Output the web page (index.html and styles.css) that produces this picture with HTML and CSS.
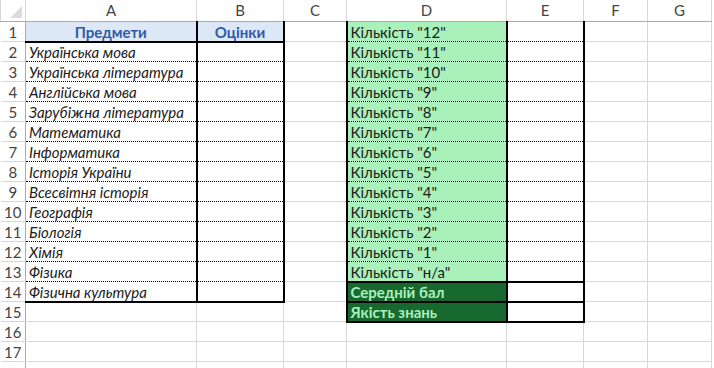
FILE: index.html
```html
<!DOCTYPE html>
<html lang="uk">
<head>
    <meta charset="UTF-8">
    <title>Оцінки</title>
    <link rel="stylesheet" href="styles.css">
</head>
<body>
    <!-- Аркуш: предмети з оцінками та підсумкова статистика -->
    <table class="sheet">
        <colgroup>
            <col class="w-rh">
            <col class="w-a">
            <col class="w-b">
            <col class="w-c">
            <col class="w-d">
            <col class="w-e">
            <col class="w-f">
            <col class="w-g">
        </colgroup>
        <tr class="col-head">
            <th class="corner"><span class="tri"></span></th>
            <th>A</th><th>B</th><th>C</th><th>D</th><th>E</th><th>F</th><th>G</th>
        </tr>
        <tr>
            <th class="rh">1</th>
            <td class="title tb tr">Предмети</td>
            <td class="title tb tr">Оцінки</td>
            <td class="tr"></td>
            <td class="in green tr">Кількість "12"</td>
            <td class="in tr"></td>
            <td></td><td></td>
        </tr>
        <tr>
            <th class="rh">2</th>
            <td class="in subj tr">Українська мова</td>
            <td class="in tr"></td>
            <td class="tr"></td>
            <td class="in green tr">Кількість "11"</td>
            <td class="in tr"></td>
            <td></td><td></td>
        </tr>
        <tr>
            <th class="rh">3</th>
            <td class="in subj tr">Українська література</td>
            <td class="in tr"></td>
            <td class="tr"></td>
            <td class="in green tr">Кількість "10"</td>
            <td class="in tr"></td>
            <td></td><td></td>
        </tr>
        <tr>
            <th class="rh">4</th>
            <td class="in subj tr">Англійська мова</td>
            <td class="in tr"></td>
            <td class="tr"></td>
            <td class="in green tr">Кількість "9"</td>
            <td class="in tr"></td>
            <td></td><td></td>
        </tr>
        <tr>
            <th class="rh">5</th>
            <td class="in subj tr">Зарубіжна література</td>
            <td class="in tr"></td>
            <td class="tr"></td>
            <td class="in green tr">Кількість "8"</td>
            <td class="in tr"></td>
            <td></td><td></td>
        </tr>
        <tr>
            <th class="rh">6</th>
            <td class="in subj tr">Математика</td>
            <td class="in tr"></td>
            <td class="tr"></td>
            <td class="in green tr">Кількість "7"</td>
            <td class="in tr"></td>
            <td></td><td></td>
        </tr>
        <tr>
            <th class="rh">7</th>
            <td class="in subj tr">Інформатика</td>
            <td class="in tr"></td>
            <td class="tr"></td>
            <td class="in green tr">Кількість "6"</td>
            <td class="in tr"></td>
            <td></td><td></td>
        </tr>
        <tr>
            <th class="rh">8</th>
            <td class="in subj tr">Історія України</td>
            <td class="in tr"></td>
            <td class="tr"></td>
            <td class="in green tr">Кількість "5"</td>
            <td class="in tr"></td>
            <td></td><td></td>
        </tr>
        <tr>
            <th class="rh">9</th>
            <td class="in subj tr">Всесвітня історія</td>
            <td class="in tr"></td>
            <td class="tr"></td>
            <td class="in green tr">Кількість "4"</td>
            <td class="in tr"></td>
            <td></td><td></td>
        </tr>
        <tr>
            <th class="rh">10</th>
            <td class="in subj tr">Географія</td>
            <td class="in tr"></td>
            <td class="tr"></td>
            <td class="in green tr">Кількість "3"</td>
            <td class="in tr"></td>
            <td></td><td></td>
        </tr>
        <tr>
            <th class="rh">11</th>
            <td class="in subj tr">Біологія</td>
            <td class="in tr"></td>
            <td class="tr"></td>
            <td class="in green tr">Кількість "2"</td>
            <td class="in tr"></td>
            <td></td><td></td>
        </tr>
        <tr>
            <th class="rh">12</th>
            <td class="in subj tr">Хімія</td>
            <td class="in tr"></td>
            <td class="tr"></td>
            <td class="in green tr">Кількість "1"</td>
            <td class="in tr"></td>
            <td></td><td></td>
        </tr>
        <tr>
            <th class="rh">13</th>
            <td class="in subj tr">Фізика</td>
            <td class="in tr"></td>
            <td class="tr"></td>
            <td class="in green tr tb">Кількість "н/а"</td>
            <td class="in tr tb"></td>
            <td></td><td></td>
        </tr>
        <tr>
            <th class="rh">14</th>
            <td class="in subj tr tb">Фізична культура</td>
            <td class="in tr tb"></td>
            <td class="tr"></td>
            <td class="dark tr tb">Середній бал</td>
            <td class="tr tb"></td>
            <td></td><td></td>
        </tr>
        <tr>
            <th class="rh">15</th>
            <td></td><td></td>
            <td class="tr"></td>
            <td class="dark tr tb">Якість знань</td>
            <td class="tr tb"></td>
            <td></td><td></td>
        </tr>
        <tr>
            <th class="rh">16</th>
            <td></td><td></td><td></td><td></td><td></td><td></td><td></td>
        </tr>
        <tr>
            <th class="rh">17</th>
            <td></td><td></td><td></td><td></td><td></td><td></td><td></td>
        </tr>
        <tr>
            <th class="rh"></th>
            <td></td><td></td><td></td><td></td><td></td><td></td><td></td>
        </tr>
    </table>
</body>
</html>
```

FILE: styles.css
```css
body {
    margin: 0;
    background-color: #fff;
    font-family: Lato, "Open Sans", sans-serif;
    font-size: 15px;
    color: #1b1b1b;
    overflow: hidden;
}

.sheet {
    border-collapse: collapse;
    table-layout: fixed;
    width: 711px;
}

.w-rh { width: 25px; }
.w-a { width: 171px; }
.w-b { width: 87px; }
.w-c { width: 63px; }
.w-d { width: 160px; }
.w-e { width: 77px; }
.w-f { width: 64px; }
.w-g { width: 64px; }

.sheet tr {
    height: 20px;
}

.sheet td {
    border: 1px solid #d8d8d8;
    padding: 0 3px;
    white-space: nowrap;
    overflow: hidden;
    vertical-align: bottom;
    line-height: 17px;
}

/* заголовки стовпців і рядків */
.col-head {
    height: 22px;
}

.col-head th {
    border: 1px solid #d8d8d8;
    border-top: none;
    border-bottom: 1px solid #ababab;
    font-weight: normal;
    color: #444;
    padding: 0;
    line-height: 21px;
}

.corner {
    position: relative;
}

.tri {
    position: absolute;
    right: 3px;
    bottom: 3px;
    width: 0;
    height: 0;
    border-left: 12px solid transparent;
    border-bottom: 12px solid #dcdcdc;
}

.rh {
    border: 1px solid #d8d8d8;
    border-left: none;
    border-right: 1px solid #ababab;
    font-weight: normal;
    color: #444;
    padding: 0;
    text-align: center;
    vertical-align: bottom;
    line-height: 17px;
}

/* межі таблиць */
.sheet td.in {
    border-top: 1px dotted #000;
    border-bottom: 1px dotted #000;
}

.sheet td.tr {
    border-right: 2px solid #000;
}

.sheet td.tb {
    border-bottom: 2px solid #000;
}

/* оформлення клітинок */
.title {
    background-color: #dde8f6;
    color: #2f5aa8;
    font-weight: bold;
    text-align: center;
}

.subj {
    font-style: italic;
}

.green {
    background-color: #a9f0ba;
}

.dark {
    background-color: #17692f;
    color: #a9f0ba;
    font-weight: bold;
}
```
